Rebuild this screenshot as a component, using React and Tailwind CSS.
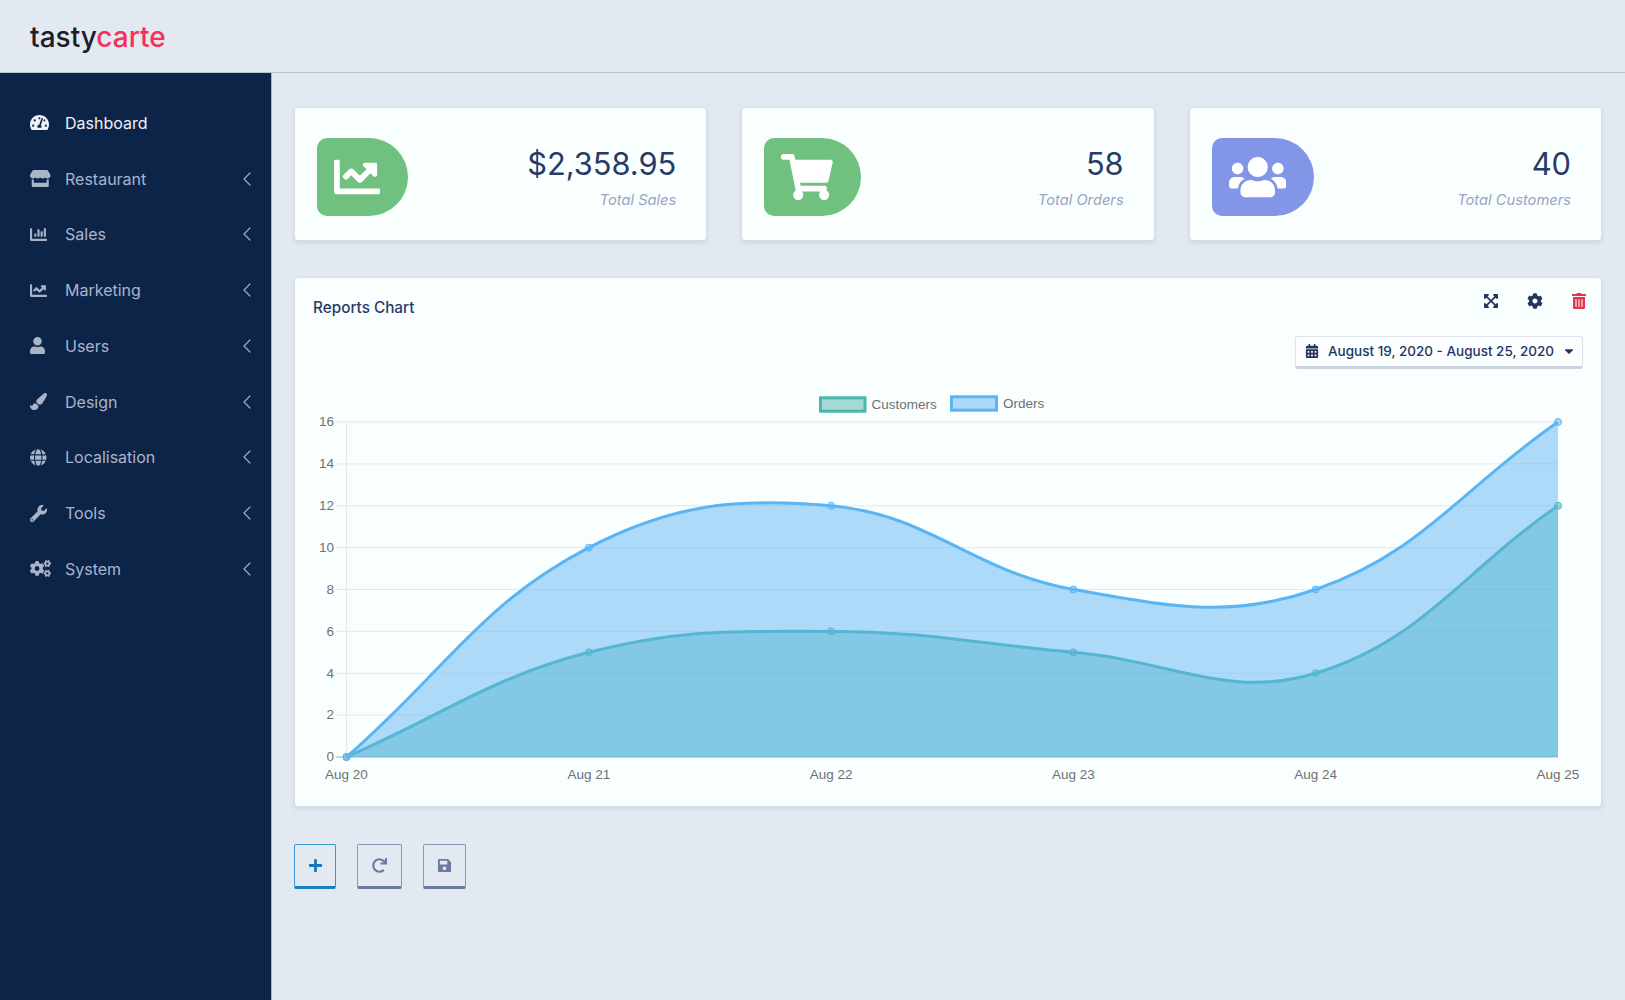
import { FaTachometerAlt, FaStore, FaChartBar, FaChartLine, FaUser, FaPaintBrush, FaGlobe, FaWrench, FaCogs, FaShoppingCart, FaUsers, FaExpandArrowsAlt, FaCog, FaTrashAlt, FaCalendarAlt, FaCaretDown, FaPlus, FaRedo, FaSave } from "react-icons/fa";
import { ChevronLeft } from "lucide-react";

const menu = [
    { label: "Dashboard", icon: FaTachometerAlt, size: "w-[19px] h-[17px]", active: true },
    { label: "Restaurant", icon: FaStore, size: "w-[20.5px] h-[17px]" },
    { label: "Sales", icon: FaChartBar, size: "w-[17px] h-[17px]" },
    { label: "Marketing", icon: FaChartLine, size: "w-[17px] h-[17px]" },
    { label: "Users", icon: FaUser, size: "w-[15px] h-[17px]" },
    { label: "Design", icon: FaPaintBrush, size: "w-[17px] h-[17px]" },
    { label: "Localisation", icon: FaGlobe, size: "w-[16.5px] h-[17px]" },
    { label: "Tools", icon: FaWrench, size: "w-[17px] h-[17px]" },
    { label: "System", icon: FaCogs, size: "w-[21px] h-[17px]" },
];

// chart area, in page coordinates
const left = 346.5;
const right = 1558;
const top = 422;
const bottom = 757;
const days = ["Aug 20", "Aug 21", "Aug 22", "Aug 23", "Aug 24", "Aug 25"];
const ticks = [0, 2, 4, 6, 8, 10, 12, 14, 16];
const customers = [0, 5, 6, 5, 4, 12];
const orders = [0, 10, 12, 8, 8, 16];

const xAt = (i) => left + (i * (right - left)) / 5;
const yAt = (v) => bottom - (v * (bottom - top)) / 16;

// same spline as chart.js (tension 0.4)
function curve(data) {
    const pts = data.map((v, i) => [xAt(i), yAt(v)]);
    const ctrl = pts.map((p, i) => {
        const prev = pts[i - 1] || p;
        const next = pts[i + 1] || p;
        const d1 = Math.hypot(p[0] - prev[0], p[1] - prev[1]);
        const d2 = Math.hypot(next[0] - p[0], next[1] - p[1]);
        const fa = (0.4 * d1) / (d1 + d2);
        const fb = (0.4 * d2) / (d1 + d2);
        return {
            a: [p[0] - fa * (next[0] - prev[0]), p[1] - fa * (next[1] - prev[1])],
            b: [p[0] + fb * (next[0] - prev[0]), p[1] + fb * (next[1] - prev[1])],
        };
    });
    let d = `M${pts[0][0]} ${pts[0][1]}`;
    for (let i = 1; i < pts.length; i++) {
        d += ` C${ctrl[i - 1].b[0]} ${ctrl[i - 1].b[1]} ${ctrl[i].a[0]} ${ctrl[i].a[1]} ${pts[i][0]} ${pts[i][1]}`;
    }
    return d;
}

function Series({ data, line, fill }) {
    const d = curve(data);
    return (
        <g>
            <path d={`${d} L${right} ${bottom} L${left} ${bottom} Z`} fill={fill} />
            <path d={d} fill="none" stroke={line} strokeWidth="3" />
            {data.map((v, i) => (
                <circle key={i} cx={xAt(i)} cy={yAt(v)} r="3.5" fill={fill} stroke={line} strokeWidth="1" />
            ))}
        </g>
    );
}

function Chart() {
    return (
        <svg viewBox="295 385 1306 420" className="block w-[1306px] h-[420px]" style={{ fontFamily: '"Liberation Sans", Arial, sans-serif' }}>
            <rect x="820.5" y="397.8" width="44.5" height="13.4" fill="#a6dad4" stroke="#47b8ae" strokeWidth="3" />
            <text x="871.5" y="409" fontSize="13.5" fill="#707070">Customers</text>
            <rect x="951.5" y="396.8" width="45" height="13.4" fill="#aed8fb" stroke="#5ab5f5" strokeWidth="3" />
            <text x="1003" y="408" fontSize="13.5" fill="#707070">Orders</text>

            {ticks.map((t) => (
                <g key={t}>
                    <line x1="336" x2={right} y1={yAt(t)} y2={yAt(t)} stroke={t === 0 ? "#a9adad" : "#e3e8e8"} />
                    <text x="334" y={yAt(t) + 4.3} fontSize="13.5" fill="#707070" textAnchor="end">{t}</text>
                </g>
            ))}
            <line x1={left} x2={left} y1={top} y2={bottom + 1} stroke="#e3e8e8" />

            <Series data={customers} line="#47b6ae" fill="rgba(77,182,172,0.5)" />
            <Series data={orders} line="#5ab5f5" fill="rgba(100,181,246,0.5)" />

            {days.map((day, i) => (
                <text key={day} x={xAt(i)} y="778.5" fontSize="13.5" fill="#707070" textAnchor="middle">{day}</text>
            ))}
        </svg>
    );
}

function StatCard({ icon: Icon, iconSize, value, label, color }) {
    return (
        <div className="h-[134px] flex items-center justify-between pt-[5px] pl-[22px] pr-[30px] bg-[#f9ffff] border border-[#d9dfea] rounded-[4px] shadow-[0_2px_4px_rgba(60,75,110,0.12)]">
            <div className={`${color} h-[78px] flex items-center pl-[17px] pr-[28px] rounded-l-[10px] rounded-r-[39px] text-white`}>
                <Icon className={iconSize} />
            </div>
            <div className="mt-[1px] text-right">
                <div className="text-[30.8px] leading-[38px] text-[#2a3a66]">{value}</div>
                <div className="mt-[7px] text-[14.7px] leading-[20px] italic text-[#9aa3bf]">{label}</div>
            </div>
        </div>
    );
}

export default function App() {
    return (
        <div className="h-screen w-full flex flex-col overflow-hidden bg-[#e3e9f1] font-['Inter',sans-serif]">
            <header className="h-[73px] shrink-0 flex items-center pt-[2px] pl-[30px] bg-[#e3e9f0] border-b border-[#b9c2d1]">
                <div className="text-[28px] leading-none font-[450] text-[#1d1e2c]">
                    tasty<span className="text-[#f5305a]">carte</span>
                </div>
            </header>
            <div className="flex-1 flex min-h-0">
                <aside className="w-[272px] shrink-0 pt-[22px] bg-[#0d2449] border-r border-[#a8b4cc]">
                    {menu.map((item) => (
                        <div key={item.label} className={`h-[55.75px] flex items-center pl-[30px] pr-[12.5px] ${item.active ? "text-[#eef2f7]" : "text-[#aab4c9]"}`}>
                            <span className="w-[35px] shrink-0">
                                <item.icon className={item.size} />
                            </span>
                            <span className="flex-1 text-[16px]">{item.label}</span>
                            {!item.active && <ChevronLeft size={24} strokeWidth={1.2} className="text-[#a0abc2]" />}
                        </div>
                    ))}
                </aside>
                <main className="flex-1 min-w-0 pt-[34px] pl-[22px] pr-[23px]">
                    <div className="grid grid-cols-3 gap-x-[34px]">
                        <StatCard icon={FaChartLine} iconSize="w-[46px] h-[46px]" value="$2,358.95" label="Total Sales" color="bg-[#70c17f]" />
                        <StatCard icon={FaShoppingCart} iconSize="w-[51.75px] h-[46px]" value="58" label="Total Orders" color="bg-[#70c17f]" />
                        <StatCard icon={FaUsers} iconSize="w-[57.5px] h-[46px]" value="40" label="Total Customers" color="bg-[#8395e6]" />
                    </div>
                    <section className="mt-[36px] h-[530px] bg-[#f9ffff] border border-[#d9dfea] rounded-[4px] shadow-[0_2px_4px_rgba(60,75,110,0.12)] overflow-hidden">
                        <div className="h-[107px] pt-[15px] pl-[18px] pr-[14px]">
                            <div className="flex justify-between">
                                <h3 className="mt-[4px] text-[15.3px] font-medium text-[#2a3a66]">Reports Chart</h3>
                                <div className="flex gap-[28px] text-[#24365f]">
                                    <FaExpandArrowsAlt size={16} />
                                    <FaCog size={16} />
                                    <FaTrashAlt size={16} className="text-[#e4344a]" />
                                </div>
                            </div>
                            <div className="flex justify-end mt-[16px] pr-[4px]">
                                <button className="w-[288px] h-[33px] flex items-center pl-[9px] pr-[6px] bg-[#fbffff] border border-[#dde2ec] border-b-[3px] border-b-[#ccd3e0] rounded-[3px] text-[13.5px] font-medium text-[#24365f] whitespace-nowrap">
                                    <FaCalendarAlt size={14} />
                                    <span className="ml-[9px] flex-1 text-left">August 19, 2020 - August 25, 2020</span>
                                    <FaCaretDown size={14} />
                                </button>
                            </div>
                        </div>
                        <Chart />
                    </section>
                    <div className="mt-[37px] flex gap-[21px]">
                        <button className="w-[42px] h-[45px] flex items-center justify-center border border-[#3b93d0] border-b-[3px] border-b-[#1a7fc1] rounded-[2px] text-[#1578bf]">
                            <FaPlus size={15} />
                        </button>
                        <button className="w-[45px] h-[45px] flex items-center justify-center border border-[#8c97b8] border-b-[3px] border-b-[#6c7a9e] rounded-[2px] text-[#6b7a9f]">
                            <FaRedo size={15} />
                        </button>
                        <button className="w-[43px] h-[45px] flex items-center justify-center border border-[#8c97b8] border-b-[3px] border-b-[#6c7a9e] rounded-[2px] text-[#6b7a9f]">
                            <FaSave size={15} />
                        </button>
                    </div>
                </main>
            </div>
        </div>
    );
}
